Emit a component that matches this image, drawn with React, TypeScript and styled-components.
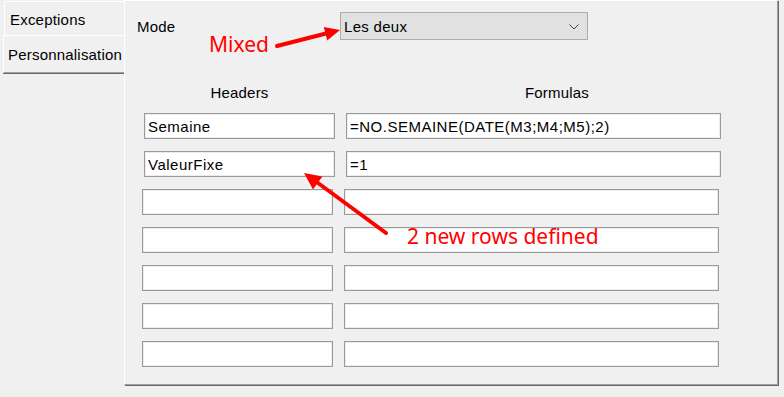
import React from "react";
import styled, { createGlobalStyle } from "styled-components";

const Global = createGlobalStyle`
  html, body { margin: 0; padding: 0; background: #f0f0f0; }
  body { font-family: "Liberation Sans", Arial, sans-serif; color: #000; }
  * { box-sizing: border-box; }
`;

const Page = styled.div`
  position: relative;
  width: 784px;
  height: 397px;
  display: flex;
  align-items: flex-start;
  overflow: hidden;
`;

const TabStrip = styled.div`
  width: 124px;
  flex: none;
  display: flex;
  flex-direction: column;
  padding-top: 1px;
`;

const Tab = styled.div<{ $selected?: boolean }>`
  display: flex;
  align-items: center;
  font-size: 15px;
  letter-spacing: 0.2px;
  white-space: nowrap;
  background: #f0f0f0;
  border-top: 1px solid #ffffff;
  border-left: 1px solid #ffffff;
  margin-left: ${(p) => (p.$selected ? "3px" : "4px")};
  height: ${(p) => (p.$selected ? "38px" : "34px")};
  padding-left: ${(p) => (p.$selected ? "4px" : "5px")};
  padding-top: 1px;
  border-bottom: ${(p) => (p.$selected ? "1px solid #a0a0a0" : "none")};
  box-shadow: ${(p) => (p.$selected ? "0 1px 0 #696969" : "none")};
`;

const Panel = styled.div`
  width: 654px;
  height: 385px;
  flex: none;
  border-left: 1px solid #ffffff;
  border-top: 1px solid #ffffff;
  border-right: 1px solid #a0a0a0;
  border-bottom: 1px solid #a0a0a0;
  box-shadow: 1px 1px 0 #696969;
  display: flex;
  flex-direction: column;
  padding-left: 17px;
`;

const ModeRow = styled.div`
  display: flex;
  align-items: center;
  margin-top: 11px;
  height: 28px;
`;

const ModeLabel = styled.div`
  width: 203px;
  font-size: 15px;
  letter-spacing: 0.2px;
  margin-left: -5px;
  padding-top: 1px;
`;

const Combo = styled.div`
  width: 248px;
  height: 28px;
  background: #e1e1e1;
  border: 1px solid #adadad;
  display: flex;
  align-items: center;
  justify-content: space-between;
  padding: 1px 8px 0 3px;
  font-size: 15px;
  letter-spacing: 0.3px;
`;

const ColumnHeads = styled.div`
  display: flex;
  margin-top: 44px;
  height: 16px;
  align-items: center;
  font-size: 15px;
  letter-spacing: 0.2px;
`;

const HeadCell = styled.div<{ $width: number }>`
  width: ${(p) => p.$width}px;
  text-align: center;
`;

const Rows = styled.div`
  display: flex;
  flex-direction: column;
  gap: 12px;
  margin-top: 13px;
`;

const Row = styled.div<{ $shift: number }>`
  display: flex;
  gap: 11px;
  margin-left: ${(p) => p.$shift}px;
`;

const TextBox = styled.input<{ $width: number }>`
  width: ${(p) => p.$width}px;
  height: 26px;
  background: #ffffff;
  border: 1px solid #9a9a9a;
  box-shadow: inset 0 0 0 1px #ececec;
  outline: none;
  margin: 0;
  padding: 1px 0 0 3px;
  font-family: "Liberation Sans", Arial, sans-serif;
  font-size: 15px;
  letter-spacing: 0.5px;
  color: #000;
`;

const Overlay = styled.svg`
  position: absolute;
  left: 0;
  top: 0;
  width: 784px;
  height: 397px;
  pointer-events: none;
`;

const Note = styled.span<{ $x: number; $y: number }>`
  position: absolute;
  left: ${(p) => p.$x}px;
  top: ${(p) => p.$y}px;
  font-family: "Noto Sans", "Open Sans", sans-serif;
  font-size: 21px;
  line-height: 21px;
  color: #ff0000;
  white-space: nowrap;
  pointer-events: none;
`;

const rows = [
  { header: "Semaine", formula: "=NO.SEMAINE(DATE(M3;M4;M5);2)", shift: 2 },
  { header: "ValeurFixe", formula: "=1", shift: 2 },
  { header: "", formula: "", shift: 0 },
  { header: "", formula: "", shift: 0 },
  { header: "", formula: "", shift: 0 },
  { header: "", formula: "", shift: 0 },
  { header: "", formula: "", shift: 0 },
];

export default function App() {
  return (
    <>
      <Global />
      <Page>
        <TabStrip>
          <Tab>Exceptions</Tab>
          <Tab $selected>Personnalisation</Tab>
        </TabStrip>
        <Panel>
          <ModeRow>
            <ModeLabel>Mode</ModeLabel>
            <Combo>
              <span>Les deux</span>
              <svg width="10" height="6" viewBox="0 0 10 6">
                <polyline points="0.5,0.5 5,5 9.5,0.5" fill="none" stroke="#404040" strokeWidth="1" />
              </svg>
            </Combo>
          </ModeRow>
          <ColumnHeads>
            <HeadCell $width={195}>Headers</HeadCell>
            <HeadCell $width={440}>Formulas</HeadCell>
          </ColumnHeads>
          <Rows>
            {rows.map((r, i) => (
              <Row key={i} $shift={r.shift}>
                <TextBox $width={191} defaultValue={r.header} readOnly />
                <TextBox $width={375} defaultValue={r.formula} readOnly />
              </Row>
            ))}
          </Rows>
        </Panel>
        <Overlay viewBox="0 0 784 397">
          <line x1="277" y1="46" x2="327" y2="33.3" stroke="#ff0000" strokeWidth="4" strokeLinecap="round" />
          <polygon points="340,30 327.2,40.5 323.8,26.9" fill="#ff0000" />
          <line x1="386" y1="233" x2="318" y2="183" stroke="#ff0000" strokeWidth="4" strokeLinecap="round" />
          <polygon points="304,173 322.4,176.5 313,189.5" fill="#ff0000" />
        </Overlay>
        <Note $x={209} $y={34}>Mixed</Note>
        <Note $x={407} $y={226}>2 new rows defined</Note>
      </Page>
    </>
  );
}
